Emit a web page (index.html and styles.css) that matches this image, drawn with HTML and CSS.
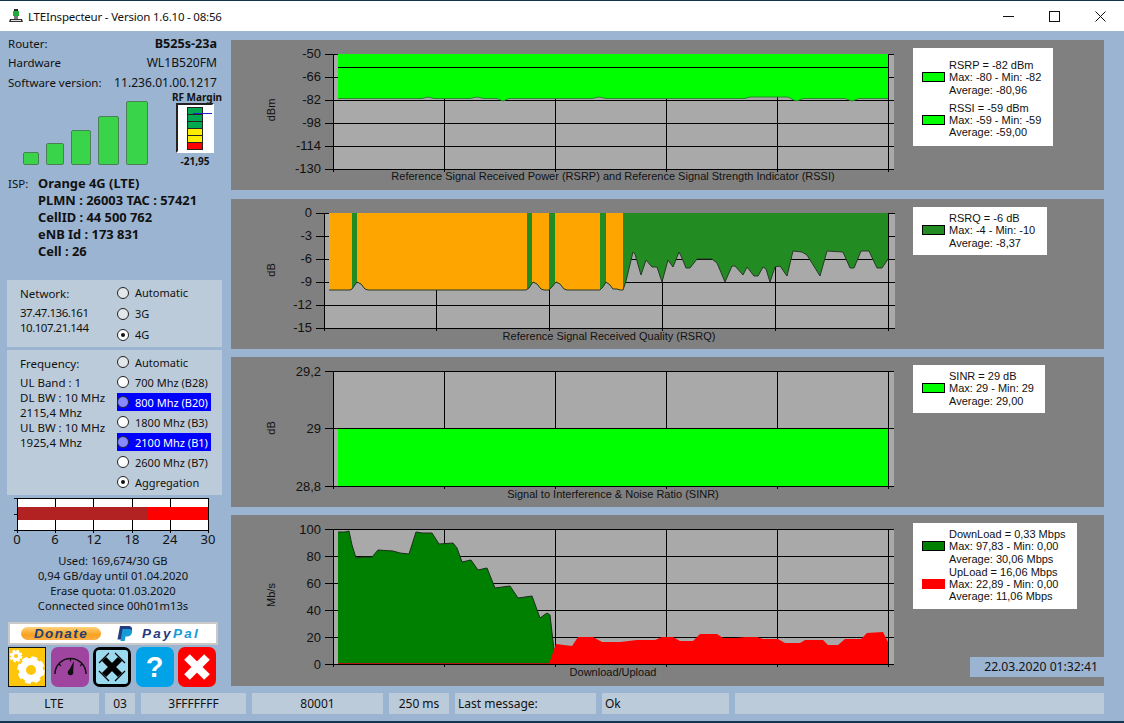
FILE: index.html
```html
<!DOCTYPE html>
<html>
<head>
    <meta charset="utf-8">
    <title>LTEInspecteur</title>
    <link rel="stylesheet" href="styles.css">
</head>
<body>
<div class="window">
    <div class="titlebar">
        <svg class="app-icon" width="14" height="14" viewBox="0 0 14 14">
            <rect x="4" y="2" width="6" height="5" fill="#1fae3c"/>
            <rect x="5" y="0" width="4" height="2" fill="#2b2b2b"/>
            <rect x="5" y="7" width="4" height="3" fill="#777"/>
            <path d="M1 10h12l1 3H0z" fill="#333"/>
            <rect x="2" y="11" width="10" height="1" fill="#ddd"/>
        </svg>
        <div class="title">LTEInspecteur - Version 1.6.10 - 08:56</div>
        <div class="win-controls">
            <svg width="11" height="11" viewBox="0 0 11 11"><path d="M0 5.5H11" stroke="#111"/></svg>
            <svg width="11" height="11" viewBox="0 0 11 11"><rect x=".5" y=".5" width="10" height="10" fill="none" stroke="#111"/></svg>
            <svg width="11" height="11" viewBox="0 0 11 11"><path d="M.5 .5L10.5 10.5M10.5 .5L.5 10.5" stroke="#111"/></svg>
        </div>
    </div>

    <div class="main">
        <div class="sidebar">
            <div class="info-row"><span>Router:</span><b class="info-value">B525s-23a</b></div>
            <div class="info-row info-row-tall"><span>Hardware</span><span class="info-value">WL1B520FM</span></div>
            <div class="info-row info-row-tall"><span>Software version:</span><span class="info-value">11.236.01.00.1217</span></div>

            <div class="signal">
                <div class="bars">
                    <div class="bar bar-1"></div>
                    <div class="bar bar-2"></div>
                    <div class="bar bar-3"></div>
                    <div class="bar bar-4"></div>
                    <div class="bar bar-5"></div>
                </div>
                <div class="rf">
                    <div class="rf-label">RF Margin</div>
                    <div class="rf-box">
                        <div class="rf-scale">
                            <i class="lvl-green"></i><i class="lvl-green"></i><i class="lvl-green"></i>
                            <i class="lvl-yellow"></i><i class="lvl-yellow"></i><i class="lvl-red"></i>
                        </div>
                        <div class="rf-needle"></div>
                    </div>
                    <div class="rf-label rf-value">-21,95</div>
                </div>
            </div>

            <div class="isp">
                <div class="isp-label">ISP:</div>
                <div class="isp-lines">
                    <div>Orange 4G (LTE)</div>
                    <div>PLMN : 26003 TAC : 57421</div>
                    <div>CellID : 44 500 762</div>
                    <div>eNB Id : 173 831</div>
                    <div>Cell : 26</div>
                </div>
            </div>

            <div class="box box-network">
                <div class="box-text">
                    <div class="box-head">Network:</div>
                    <div class="ip">37.47.136.161</div>
                    <div class="ip">10.107.21.144</div>
                </div>
                <div class="radios radios-wide">
                    <div class="radio-row"><span class="radio radio-off"></span>Automatic</div>
                    <div class="radio-row"><span class="radio radio-off"></span>3G</div>
                    <div class="radio-row"><span class="radio radio-on"></span>4G</div>
                </div>
            </div>

            <div class="box box-freq">
                <div class="box-text">
                    <div class="box-head">Frequency:</div>
                    <div>UL Band : 1</div>
                    <div>DL BW : 10 MHz</div>
                    <div>2115,4 Mhz</div>
                    <div>UL BW : 10 MHz</div>
                    <div>1925,4 Mhz</div>
                </div>
                <div class="radios">
                    <div class="radio-row"><span class="radio radio-off"></span>Automatic</div>
                    <div class="radio-row"><span class="radio"></span>700 Mhz (B28)</div>
                    <div class="radio-row radio-active"><span class="radio"></span>800 Mhz (B20)</div>
                    <div class="radio-row"><span class="radio"></span>1800 Mhz (B3)</div>
                    <div class="radio-row radio-active"><span class="radio"></span>2100 Mhz (B1)</div>
                    <div class="radio-row"><span class="radio"></span>2600 Mhz (B7)</div>
                    <div class="radio-row"><span class="radio radio-on"></span>Aggregation</div>
                </div>
            </div>

            <svg class="quota" width="231" height="52" viewBox="0 495 231 52">
                <rect x="17" y="498" width="191" height="32" fill="#fff"/>
                <rect x="17" y="507" width="131" height="13" fill="#b22222"/>
                <rect x="148" y="507" width="60" height="13" fill="#f00"/>
                <path class="grid" d="M17.5 498V533M55.5 498V507M55.5 520V533M93.5 498V507M93.5 520V533M132.5 498V507M132.5 520V533M170.5 498V507M170.5 520V533M208.5 498V533M14 498.5H208M14 514.5H17M14 530.5H208"/>
                <text class="quota-num" x="17" y="544">0</text>
                <text class="quota-num" x="55" y="544">6</text>
                <text class="quota-num" x="94" y="544">12</text>
                <text class="quota-num" x="132" y="544">18</text>
                <text class="quota-num" x="170" y="544">24</text>
                <text class="quota-num" x="208" y="544">30</text>
            </svg>

            <div class="quota-text">
                <div>Used: 169,674/30 GB</div>
                <div>0,94 GB/day until 01.04.2020</div>
                <div>Erase quota: 01.03.2020</div>
                <div>Connected since 00h01m13s</div>
            </div>

            <div class="donate">
                <div class="donate-btn">Donate</div>
                <svg class="pp-mark" width="18" height="15" viewBox="0 0 18 15">
                    <path d="M4 0h8c3.500 0 4.500 2 4 4.300C15.400 7 13 8.500 10 8.500H7.500L6.500 13.500H1.500z" fill="#253b80"/>
                    <path d="M6.500 3h6.500c2.500 0 3.500 1.500 3 3.500C15.500 9 13.500 10.500 11 10.500H9.500L8.700 15H4.500z" fill="#179bd7"/>
                </svg>
                <div class="pp-text">Pay<span>Pal</span></div>
            </div>

            <div class="tools">
                <svg class="tool tool-gear" width="38" height="40" viewBox="0 0 38 40">
                    <circle cx="23" cy="23" r="8.500" fill="none" stroke="#fff" stroke-width="7"/>
                    <circle cx="23" cy="23" r="11.500" fill="none" stroke="#fff" stroke-width="4.500" stroke-dasharray="5.500 3.530"/>
                    <circle cx="8" cy="9" r="3.500" fill="none" stroke="#fff" stroke-width="3"/>
                    <circle cx="8" cy="9" r="5.300" fill="none" stroke="#fff" stroke-width="2.200" stroke-dasharray="2.500 1.660"/>
                </svg>
                <svg class="tool tool-gauge" width="38" height="40" viewBox="0 0 38 40">
                    <path d="M4 27A15.500 15.500 0 0 1 35 27" fill="none" stroke="#111" stroke-width="1.500"/>
                    <path d="M8 17l2 2M19.500 11.500v3M31 17l-2 2" stroke="#111" stroke-width="1.200"/>
                    <path d="M17 25L23 14L22 26z" fill="#111"/>
                    <circle cx="19.500" cy="25.500" r="2.800" fill="#111"/>
                </svg>
                <svg class="tool tool-move" width="38" height="40" viewBox="0 0 38 40">
                    <rect x="3" y="3" width="32" height="34" rx="3" fill="#9bd9ee"/>
                    <path d="M11 12L27 28M27 12L11 28" stroke="#000" stroke-width="6"/>
                    <path d="M6 16L16 6M22 6L32 16M6 24L16 34M22 34L32 24" stroke="#000" stroke-width="1.200"/>
                </svg>
                <div class="tool tool-help">?</div>
                <svg class="tool tool-close" width="38" height="40" viewBox="0 0 38 40">
                    <path d="M9 10L29 30M29 10L9 30" stroke="#fff" stroke-width="8"/>
                </svg>
            </div>
        </div>

        <div class="charts">
            <div class="panel panel-gap">
                <svg class="plot" width="680" height="150" viewBox="231 40 680 150">
                    <rect x="333" y="54" width="561" height="115" fill="#a9a9a9"/>
                    <path class="grid" d="M325 54.500H894M325 77.500H894M325 100.500H894M325 123.500H894M325 146.500H894M325 169.500H894M333.500 54V172M444.500 54V172M555.500 54V172M666.500 54V172M777.500 54V172M888.500 54V172"/>
                    <path d="M338 54V98.500H422L428 97L434 98.500H470L477 97L484 98.500H497L503 101L509 98.500H592L599 97L606 98.500H745L750 97H788L796 101L804 98.500H845L852 101L859 98.500H888V54Z" fill="#0f0"/>
                    <path d="M338 98.500H422L428 97L434 98.500H470L477 97L484 98.500H497L503 101L509 98.500H592L599 97L606 98.500H745L750 97H788L796 101L804 98.500H845L852 101L859 98.500H888" fill="none" stroke="#2a8a2a"/>
                    <path class="grid" d="M338 67.500H888"/>
                    <text class="tick" x="321" y="58">-50</text>
                    <text class="tick" x="321" y="81">-66</text>
                    <text class="tick" x="321" y="104">-82</text>
                    <text class="tick" x="321" y="127">-98</text>
                    <text class="tick" x="321" y="150">-114</text>
                    <text class="tick" x="321" y="173">-130</text>
                    <text class="axis" transform="translate(275 110) rotate(-90)">dBm</text>
                    <text class="chart-title" x="613" y="180">Reference Signal Received Power (RSRP) and Reference Signal Strength Indicator (RSSI)</text>
                </svg>
                <div class="side">
                    <div class="legend legend-rsrp">
                        <div class="entry"><span class="swatch swatch-lime"></span><div>RSRP = -82 dBm<br>Max: -80 - Min: -82<br>Average: -80,96</div></div>
                        <div class="entry"><span class="swatch swatch-lime"></span><div>RSSI = -59 dBm<br>Max: -59 - Min: -59<br>Average: -59,00</div></div>
                    </div>
                </div>
            </div>

            <div class="panel">
                <svg class="plot" width="680" height="150" viewBox="231 199 680 150">
                    <defs>
                        <clipPath id="rsrqArea">
                            <path d="M329 213V290H350L352 289L357 282L361 284L365 289L368 290H526L529 288L533 282L537 284L541 289L544 290H549L552 287L556 282L560 284L564 289L567 290H600L603 287L606 282L610 285L613 289L617 289L620 290H623L626 281L633 252L635 254L641 275L646 260L652 267L657 267L662 282L668 260L673 267L679 252L682 258L686 268L690 268L697 259H712L717 263L725 282L732 266L735 266L743 275L747 267L754 276L758 276L763 267L766 269L770 282L775 267L780 266L787 276L793 251L802 252L807 255L820 276L827 251L843 252L850 268L854 268L861 251L869 251L877 268L882 268L888 259V213Z"/>
                        </clipPath>
                    </defs>
                    <rect x="324" y="213" width="571" height="115" fill="#a9a9a9"/>
                    <path class="grid" d="M316 213.500H895M316 236.500H895M316 259.500H895M316 282.500H895M316 305.500H895M316 328.500H895M324.500 213V331M436.500 213V331M549.500 213V331M662.500 213V331M775.500 213V331M888.500 213V331"/>
                    <g clip-path="url(#rsrqArea)">
                        <rect x="329" y="213" width="559" height="80" fill="#228b22"/>
                        <rect x="329" y="213" width="23" height="80" fill="#ffa500"/>
                        <rect x="357" y="213" width="170" height="80" fill="#ffa500"/>
                        <rect x="532" y="213" width="17" height="80" fill="#ffa500"/>
                        <rect x="555" y="213" width="45" height="80" fill="#ffa500"/>
                        <rect x="606" y="213" width="17" height="80" fill="#ffa500"/>
                    </g>
                    <path d="M329 290H350L352 289L357 282L361 284L365 289L368 290H526L529 288L533 282L537 284L541 289L544 290H549L552 287L556 282L560 284L564 289L567 290H600L603 287L606 282L610 285L613 289L617 289L620 290H623L626 281L633 252L635 254L641 275L646 260L652 267L657 267L662 282L668 260L673 267L679 252L682 258L686 268L690 268L697 259H712L717 263L725 282L732 266L735 266L743 275L747 267L754 276L758 276L763 267L766 269L770 282L775 267L780 266L787 276L793 251L802 252L807 255L820 276L827 251L843 252L850 268L854 268L861 251L869 251L877 268L882 268L888 259" fill="none" stroke="#263a26" stroke-linejoin="round"/>
                    <text class="tick" x="312" y="217">0</text>
                    <text class="tick" x="312" y="240">-3</text>
                    <text class="tick" x="312" y="263">-6</text>
                    <text class="tick" x="312" y="286">-9</text>
                    <text class="tick" x="312" y="309">-12</text>
                    <text class="tick" x="312" y="332">-15</text>
                    <text class="axis" transform="translate(275 270) rotate(-90)">dB</text>
                    <text class="chart-title" x="609" y="340">Reference Signal Received Quality (RSRQ)</text>
                </svg>
                <div class="side">
                    <div class="legend legend-rsrq">
                        <div class="entry"><span class="swatch swatch-forest"></span><div>RSRQ = -6 dB<br>Max: -4 - Min: -10<br>Average: -8,37</div></div>
                    </div>
                </div>
            </div>

            <div class="panel">
                <svg class="plot" width="680" height="150" viewBox="231 357 680 150">
                    <rect x="333" y="371" width="561" height="115" fill="#a9a9a9"/>
                    <path class="grid" d="M325 371.500H894M325 428.500H894M325 486.500H894M333.500 371V489M444.500 371V489M555.500 371V489M666.500 371V489M777.500 371V489M888.500 371V489"/>
                    <rect x="338" y="429" width="550" height="57" fill="#0f0"/>
                    <text class="tick" x="321" y="376">29,2</text>
                    <text class="tick" x="321" y="433">29</text>
                    <text class="tick" x="321" y="491">28,8</text>
                    <text class="axis" transform="translate(275 428) rotate(-90)">dB</text>
                    <text class="chart-title" x="613" y="498">Signal to Interference &amp; Noise Ratio (SINR)</text>
                </svg>
                <div class="side">
                    <div class="legend legend-sinr">
                        <div class="entry"><span class="swatch swatch-lime"></span><div>SINR = 29 dB<br>Max: 29 - Min: 29<br>Average: 29,00</div></div>
                    </div>
                </div>
            </div>

            <div class="panel panel-tall">
                <svg class="plot" width="680" height="171" viewBox="231 515 680 171">
                    <rect x="333" y="529" width="561" height="135" fill="#a9a9a9"/>
                    <path class="grid" d="M325 529.500H894M325 556.500H894M325 583.500H894M325 610.500H894M325 637.500H894M325 664.500H894M333.500 529V667M444.500 529V667M555.500 529V667M666.500 529V667M777.500 529V667M888.500 529V667"/>
                    <path d="M338 664V532L345 532L349 531L352 545L356 558L362 557L372 557L378 550L393 551L400 553L409 554L416 532L422 533L432 533L439 544L453 543L457 548L462 562L471 560L478 570L487 568L495 588L510 586L518 598L532 596L540 618L547 613L550 615L554 650L553 664Z" fill="#008000"/>
                    <path d="M338 532L345 532L349 531L352 545L356 558L362 557L372 557L378 550L393 551L400 553L409 554L416 532L422 533L432 533L439 544L453 543L457 548L462 562L471 560L478 570L487 568L495 588L510 586L518 598L532 596L540 618L547 613L550 615L554 650" fill="none" stroke="#1c2e1c" stroke-linejoin="round"/>
                    <path d="M338 663.500H549" stroke="#b01818"/>
                    <path d="M549 664L556 644L572 646L578 637L593 637L602 642L620 642L637 640L655 640L662 637L673 637L680 641L693 641L700 634L717 634L723 638L737 638L745 637L757 637L763 639L778 639L785 643L800 643L805 640L823 640L828 645L838 645L845 639L861 639L867 633L883 632L888 642V664Z" fill="#f00"/>
                    <path class="grid" d="M325 664.500H894M888.500 640V664"/>
                    <text class="tick" x="321" y="534">100</text>
                    <text class="tick" x="321" y="561">80</text>
                    <text class="tick" x="321" y="588">60</text>
                    <text class="tick" x="321" y="615">40</text>
                    <text class="tick" x="321" y="642">20</text>
                    <text class="tick" x="321" y="669">0</text>
                    <text class="axis" transform="translate(275 595) rotate(-90)">Mb/s</text>
                    <text class="chart-title" x="613" y="676">Download/Upload</text>
                </svg>
                <div class="side">
                    <div class="legend legend-speed">
                        <div class="entry"><span class="swatch swatch-green"></span><div>DownLoad = 0,33 Mbps<br>Max: 97,83 - Min: 0,00<br>Average: 30,06 Mbps</div></div>
                        <div class="entry"><span class="swatch swatch-red"></span><div>UpLoad = 16,06 Mbps<br>Max: 22,89 - Min: 0,00<br>Average: 11,06 Mbps</div></div>
                    </div>
                    <div class="timestamp">22.03.2020 01:32:41</div>
                </div>
            </div>
        </div>
    </div>

    <div class="statusbar">
        <div class="cell cell-lte">LTE</div>
        <div class="cell cell-03">03</div>
        <div class="cell cell-band">3FFFFFFF</div>
        <div class="cell cell-code">80001</div>
        <div class="cell cell-ms">250 ms</div>
        <div class="cell cell-msg">Last message:</div>
        <div class="cell cell-ok">Ok</div>
        <div class="cell cell-rest"></div>
    </div>
</div>
<div class="desktop"></div>
</body>
</html>
```

FILE: styles.css
```css
html, body {
    margin: 0;
    height: 723px;
    overflow: hidden;
}

body {
    font-family: "Noto Sans", sans-serif;
    font-size: 11.5px;
    color: #111;
    background: #12354f;
}

.window {
    height: 720px;
    margin-top: 1px;
    background: #9ab4d2;
    display: flex;
    flex-direction: column;
}

.desktop {
    height: 2px;
}

/* title bar */
.titlebar {
    height: 30px;
    background: #fff;
    display: flex;
    align-items: center;
    padding-left: 9px;
    font-size: 11.5px;
    letter-spacing: -.2px;
}

.app-icon {
    margin-right: 5px;
}

.title {
    flex: 1;
}

.win-controls {
    display: flex;
    gap: 35px;
    padding-right: 18px;
}

/* main area */
.main {
    display: flex;
    height: 662px;
}

.sidebar {
    width: 231px;
    flex: none;
}

.info-row {
    height: 19px;
    line-height: 19px;
    margin-top: 3px;
    padding: 0 14px 0 8px;
    display: flex;
    justify-content: space-between;
}

.info-row-tall {
    height: 20px;
    line-height: 20px;
    margin-top: 0;
}

.info-value {
    font-size: 12.1px;
}

b.info-value {
    font-size: 12.600px;
}

.signal {
    display: flex;
    height: 76px;
    margin-top: -2px;
}

.bars {
    display: flex;
    align-items: flex-end;
    gap: 7px;
    height: 74px;
    padding-left: 23px;
}

.bar {
    background: #39d44a;
    border: 1px solid #4b7f55;
    border-radius: 2px;
    box-sizing: border-box;
}

.bar-1 { width: 16px; height: 13px; }
.bar-2 { width: 18px; height: 22px; }
.bar-3 { width: 20px; height: 35px; }
.bar-4 { width: 21px; height: 49px; }
.bar-5 { width: 22px; height: 64px; }

.rf {
    width: 50px;
    margin-left: 24px;
    display: flex;
    flex-direction: column;
    align-items: center;
}

.rf-label {
    font-size: 10px;
    font-weight: bold;
    line-height: 12px;
    white-space: nowrap;
}

.rf-value {
    margin-right: 4px;
}

.rf-box {
    position: relative;
    width: 34px;
    height: 49px;
    background: #fff;
    border: 2px solid;
    border-color: #222 #fff #fff #222;
    margin: 0 4px 2px 0;
    display: flex;
    justify-content: center;
    align-items: center;
}

.rf-scale {
    width: 14px;
    border: 1px solid #222;
    display: flex;
    flex-direction: column;
}

.rf-scale i {
    display: block;
    height: 6px;
    border-bottom: 1px solid #222;
}

.rf-scale i:last-child {
    border-bottom: 0;
}

.lvl-green { background: #00a84f; }
.lvl-yellow { background: #ffee00; }
.lvl-red { background: #f00; }

.rf-needle {
    position: absolute;
    left: 15px;
    right: 0;
    top: 8px;
    height: 1px;
    background: #2222cc;
}

.isp {
    display: flex;
    margin-top: 8px;
    padding-left: 8px;
    height: 105px;
}

.isp-label {
    width: 30px;
    line-height: 17px;
}

.isp-lines {
    font-weight: bold;
    font-size: 12.900px;
    line-height: 17px;
    white-space: nowrap;
}

/* radio boxes */
.box {
    width: 215px;
    margin-left: 7px;
    background: #bccbd9;
    display: flex;
    box-sizing: border-box;
}

.box-network {
    height: 67px;
    margin-bottom: 3px;
}

.box-freq {
    height: 145px;
}

.box-text {
    width: 97px;
    padding-left: 13px;
    box-sizing: border-box;
    line-height: 15px;
    flex: none;
    white-space: nowrap;
}

.box-head {
    margin: 6px 0 4px;
}

.ip {
    letter-spacing: -.5px;
}

.radios {
    padding-top: 3px;
    width: 94px;
    margin-left: 13px;
    flex: none;
    margin-right: 0;
}

.radio-row {
    height: 18px;
    margin-bottom: 2px;
    display: flex;
    align-items: center;
    gap: 6px;
    white-space: nowrap;
    font-size: 11px;
}

.radios-wide .radio-row {
    height: 19px;
}

.radio-active {
    background: #00f;
    color: #fff;
}

.radio {
    width: 10px;
    height: 10px;
    flex: none;
    border: 1px solid #222;
    border-radius: 50%;
    background: #fff;
    position: relative;
}

.radio-off {
    background: #e2e7ea;
}

.radio-active .radio {
    background: #8888ff;
    border-color: #223;
}

.radio-on::after {
    content: "";
    position: absolute;
    left: 3px;
    top: 3px;
    width: 4px;
    height: 4px;
    border-radius: 50%;
    background: #111;
}

/* quota */
.quota {
    display: block;
}

.quota-num {
    font-family: "Noto Sans", sans-serif;
    font-size: 13px;
    text-anchor: middle;
    fill: #111;
}

.quota-text {
    width: 226px;
    margin-top: 6px;
    text-align: center;
    line-height: 15px;
    font-size: 11.2px;
}

.donate {
    width: 210px;
    height: 23px;
    margin: 9px 0 2px 8px;
    box-sizing: border-box;
    background: #fff;
    border: 2px solid #c9c9c9;
    display: flex;
    align-items: center;
    font-family: "Liberation Sans", sans-serif;
    font-style: italic;
    font-weight: bold;
}

.donate-btn {
    width: 80px;
    height: 13px;
    margin-left: 11px;
    border-radius: 7px;
    background: linear-gradient(#ffd27a, #f9a11f 60%, #f8b048);
    color: #1c3f78;
    font-size: 13.5px;
    line-height: 13px;
    text-align: center;
    letter-spacing: 1.4px;
}

.pp-mark {
    margin-left: 15px;
}

.pp-text {
    margin-left: 8px;
    color: #253b80;
    font-size: 13.5px;
    letter-spacing: 2.3px;
}

.pp-text span {
    color: #179bd7;
}

.tools {
    display: flex;
    gap: 4.500px;
    padding-left: 8px;
}

.tool {
    width: 38px;
    height: 40px;
    border-radius: 7px;
    flex: none;
}

.tool-gear {
    background: #fec60a;
    border-radius: 0;
    outline: 1px solid #111;
    outline-offset: -1px;
}

.tool-gauge { background: #a0459f; }
.tool-move { background: #000; }
.tool-close { background: #f00; }

.tool-help {
    background: #00a2e8;
    color: #fff;
    font-family: "Liberation Sans", sans-serif;
    font-size: 29px;
    font-weight: bold;
    line-height: 40px;
    text-align: center;
}

/* charts */
.charts {
    width: 873px;
    padding-top: 9px;
    display: flex;
    flex-direction: column;
    gap: 8px;
}

.panel {
    height: 150px;
    flex: none;
    background: #808080;
    display: flex;
}

.panel-gap {
    margin-bottom: 1px;
}

.panel-tall {
    height: 171px;
}

.plot {
    display: block;
    flex: none;
}

.grid {
    stroke: #000;
    stroke-width: 1;
    fill: none;
    shape-rendering: crispEdges;
}

.tick, .axis, .chart-title {
    font-family: "Liberation Sans", sans-serif;
    font-size: 11px;
    fill: #111;
}

.tick {
    font-size: 13px;
    text-anchor: end;
}

.axis, .chart-title {
    text-anchor: middle;
}

.side {
    flex: 1;
    margin-left: 2px;
    display: flex;
    flex-direction: column;
    justify-content: space-between;
    padding: 8px 0 9px;
}

.legend {
    background: #fff;
    box-sizing: border-box;
    padding: 5px 0 4px 9px;
    font-family: "Liberation Sans", sans-serif;
    font-size: 11px;
    line-height: 12.300px;
    display: flex;
    flex-direction: column;
}

.legend-rsrp { width: 140px; height: 98px; padding-top: 11px; gap: 6px; }
.legend-rsrq { width: 134px; height: 48px; }
.legend-sinr { width: 132px; height: 48px; }
.legend-speed { width: 164px; height: 86px; gap: 1px; }

.entry {
    display: flex;
    align-items: center;
    gap: 4px;
    white-space: nowrap;
}

.swatch {
    width: 21px;
    height: 8px;
    border: 1px solid #000;
    flex: none;
}

.swatch-lime { background: #0f0; }
.swatch-forest { background: #228b22; }
.swatch-green { background: #008000; }

.swatch-red {
    background: #f00;
    border-color: #f00;
}

.timestamp {
    width: 134px;
    height: 20px;
    align-self: flex-end;
    background: #9ab4d2;
    line-height: 20px;
    text-align: right;
    padding-right: 6px;
    box-sizing: border-box;
    font-size: 12.2px;
}

/* status bar */
.statusbar {
    height: 21px;
    margin-top: 0;
    padding-left: 9px;
    display: flex;
    gap: 6px;
}

.cell {
    background: #bccbd9;
    line-height: 21px;
    text-align: center;
    font-size: 12px;
    box-sizing: border-box;
    white-space: nowrap;
}

.cell-lte { width: 90px; }
.cell-03 { width: 30px; }
.cell-band { width: 105px; }
.cell-code { width: 131px; }
.cell-ms { width: 60px; }
.cell-msg { width: 141px; text-align: left; padding-left: 3px; }
.cell-ok { width: 127px; text-align: left; padding-left: 3px; }
.cell-rest { width: 369px; }
```
